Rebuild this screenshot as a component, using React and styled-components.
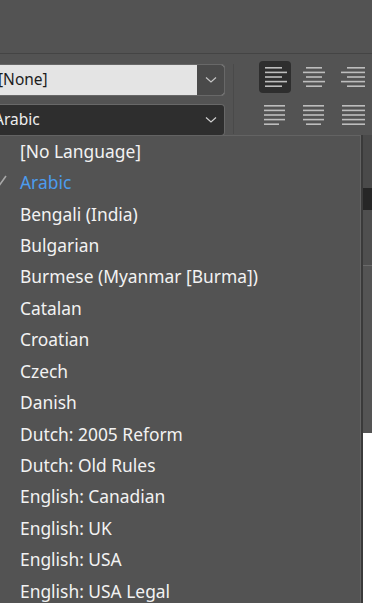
import * as React from "react"
import styled, { createGlobalStyle } from 'styled-components';

const GlobalStyle = createGlobalStyle`
  html, body {
    margin: 0;
    padding: 0;
    background: #535353;
    overflow: hidden;
  }
  body {
    font-family: "Noto Sans", "Open Sans", sans-serif;
  }
`;

const Screen = styled.div`
  width: 372px;
  height: 603px;
  display: flex;
  flex-direction: column;
  background: #535353;
  overflow: hidden;
`;

const TopBar = styled.div`
  height: 53px;
  flex: none;
  border-bottom: 1px solid #444444;
  background: #535353;
`;

const Controls = styled.div`
  height: 81px;
  flex: none;
  display: flex;
  align-items: flex-start;
`;

const SelectColumn = styled.div`
  width: 225px;
  padding-top: 10px;
  display: flex;
  flex-direction: column;
  gap: 8px;
  flex: none;
`;

const Select = styled.div`
  height: 30px;
  margin-left: -4px;
  display: flex;
  border: 1px solid #686868;
  border-left: none;
  border-radius: 0 4px 4px 0;
  overflow: hidden;
  background: ${p => p.light ? '#e4e4e4' : '#2e2e2e'};
`;

const SelectValue = styled.div`
  flex: 1;
  display: flex;
  align-items: center;
  padding-bottom: 2px;
  font-size: 15.5px;
  color: ${p => p.light ? '#1c1c1c' : '#eeeeee'};
  white-space: nowrap;
  overflow: hidden;
  margin-left: ${p => p.shift || 0}px;
`;

const SelectButton = styled.div`
  width: 27px;
  flex: none;
  display: flex;
  align-items: center;
  justify-content: center;
  background: ${p => p.light ? '#4a4a4a' : 'transparent'};
`;

const Divider = styled.div`
  width: 1px;
  height: 70px;
  margin: 10px 25px 0 8px;
  background: #4a4a4a;
  flex: none;
`;

const AlignGrid = styled.div`
  display: grid;
  grid-template-columns: repeat(3, 32px);
  column-gap: 7px;
  row-gap: 6px;
  padding-top: 7px;
`;

const AlignButton = styled.div`
  width: 32px;
  height: 32px;
  border-radius: 4px;
  background: ${p => p.active ? '#2e2e2e' : 'transparent'};
  display: flex;
  align-items: center;
  justify-content: center;
`;

const Body = styled.div`
  flex: 1;
  display: flex;
  min-height: 0;
`;

const Menu = styled.div`
  width: 362px;
  flex: none;
  background: #535353;
  border-top: 1px solid #636363;
  border-right: 1px solid #636363;
  margin-left: -2px;
  padding-top: 1px;
`;

const Item = styled.div`
  box-sizing: border-box;
  height: 31.43px;
  display: flex;
  align-items: center;
  padding: 0 0 4px 22px;
  position: relative;
  font-size: 17.4px;
  color: ${p => p.selected ? '#4c9cee' : '#f2f2f2'};
  white-space: nowrap;
`;

const Check = styled.svg`
  position: absolute;
  left: 0;
  top: 7px;
`;

const Side = styled.div`
  flex: 1;
  display: flex;
  flex-direction: column;
  border-left: 2px solid #3a3a3a;
`;

const SideBlock = styled.div`
  height: ${p => p.h}px;
  flex: ${p => p.h ? 'none' : '1'};
  background: ${p => p.bg};
  border-top: ${p => p.line ? `1px solid ${p.line}` : 'none'};
`;

const Chevron = ({ color }) => (
  <svg width="12" height="8" viewBox="0 0 12 8">
    <path d="M1 1.5 L6 6 L11 1.5" fill="none" stroke={color} strokeWidth="1.2" />
  </svg>
);

const Lines = ({ rows }) => (
  <svg width="24" height="22" viewBox="0 0 24 22">
    {rows.map(([x, w], i) => (
      <rect key={i} x={x} y={1 + i * 4.6} width={w} height="1.6" fill="#bdbdbd" />
    ))}
  </svg>
);

const alignIcons = [
  [[2, 17], [2, 22], [2, 17], [2, 22], [2, 17]],
  [[4, 16], [1, 22], [4, 16], [1, 22], [4, 16]],
  [[6, 18], [0, 24], [6, 18], [0, 24], [6, 18]],
  [[1, 21], [1, 21], [1, 21], [1, 21], [1, 15]],
  [[1, 21], [1, 21], [1, 21], [1, 21], [4, 15]],
  [[1, 23], [1, 23], [1, 23], [1, 23], [1, 23]],
];

const languages = [
  '[No Language]',
  'Arabic',
  'Bengali (India)',
  'Bulgarian',
  'Burmese (Myanmar [Burma])',
  'Catalan',
  'Croatian',
  'Czech',
  'Danish',
  'Dutch: 2005 Reform',
  'Dutch: Old Rules',
  'English: Canadian',
  'English: UK',
  'English: USA',
  'English: USA Legal',
];

const App = () => {
  return (
    <Screen>
      <GlobalStyle />
      <TopBar />
      <Controls>
        <SelectColumn>
          <Select light>
            <SelectValue light shift={2}>[None]</SelectValue>
            <SelectButton light><Chevron color="#c4c4c4" /></SelectButton>
          </Select>
          <Select>
            <SelectValue shift={-2}>Arabic</SelectValue>
            <SelectButton><Chevron color="#cfcfcf" /></SelectButton>
          </Select>
        </SelectColumn>
        <Divider />
        <AlignGrid>
          {alignIcons.map((rows, i) => (
            <AlignButton key={i} active={i === 0}>
              <Lines rows={rows} />
            </AlignButton>
          ))}
        </AlignGrid>
      </Controls>
      <Body>
        <Menu>
          {languages.map(name => (
            <Item key={name} selected={name === 'Arabic'}>
              {name === 'Arabic' && (
                <Check width="10" height="12" viewBox="0 0 10 12">
                  <path d="M-1 7 L1.5 10 L8 1" fill="none" stroke="#a8a8a8" strokeWidth="1.6" />
                </Check>
              )}
              {name}
            </Item>
          ))}
        </Menu>
        <Side>
          <SideBlock h={53} bg="#4a4a4a" />
          <SideBlock h={22} bg="#262626" />
          <SideBlock h={55} bg="#4f4f4f" />
          <SideBlock h={167} bg="#545454" line="#6a6a6a" />
          <SideBlock bg="#ffffff" />
        </Side>
      </Body>
    </Screen>
  )
}

export default App
